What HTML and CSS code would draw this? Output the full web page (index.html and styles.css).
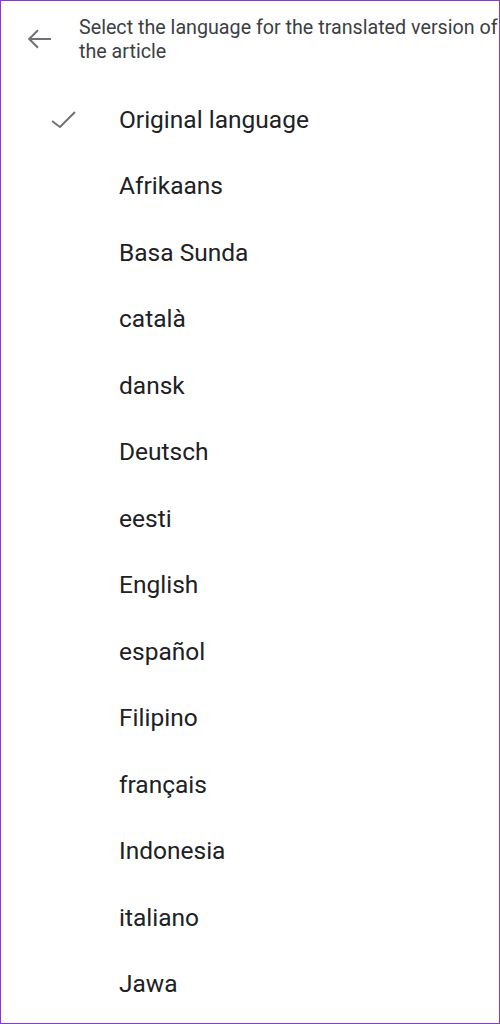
FILE: index.html
```html
<!DOCTYPE html>
<html>
<head>
<meta charset="utf-8">
<link rel="stylesheet" href="styles.css">
</head>
<body>
<div class="frame">
  <header class="header">
    <div class="back">
      <svg width="24" height="20" viewBox="0 0 24 20"><path d="M1.2 10H23M10 1.2L1.2 10L10 18.8" fill="none" stroke="#6f7175" stroke-width="2"/></svg>
    </div>
    <div class="title">Select the language for the translated version of the article</div>
  </header>
  <ul class="list">
    <li class="item"><span class="check"><svg width="26" height="18" viewBox="0 0 26 18"><path d="M2 10L10 16L25 1" fill="none" stroke="#6f7175" stroke-width="2"/></svg></span><span class="label">Original language</span></li>
    <li class="item"><span class="check"></span><span class="label">Afrikaans</span></li>
    <li class="item"><span class="check"></span><span class="label">Basa Sunda</span></li>
    <li class="item"><span class="check"></span><span class="label">català</span></li>
    <li class="item"><span class="check"></span><span class="label">dansk</span></li>
    <li class="item"><span class="check"></span><span class="label">Deutsch</span></li>
    <li class="item"><span class="check"></span><span class="label">eesti</span></li>
    <li class="item"><span class="check"></span><span class="label">English</span></li>
    <li class="item"><span class="check"></span><span class="label">español</span></li>
    <li class="item"><span class="check"></span><span class="label">Filipino</span></li>
    <li class="item"><span class="check"></span><span class="label">français</span></li>
    <li class="item"><span class="check"></span><span class="label">Indonesia</span></li>
    <li class="item"><span class="check"></span><span class="label">italiano</span></li>
    <li class="item"><span class="check"></span><span class="label">Jawa</span></li>
  </ul>
</div>
</body>
</html>
```

FILE: styles.css
```css
html, body {
  margin: 0;
  padding: 0;
  background: #ffffff;
}
.frame {
  width: 500px;
  height: 1024px;
  box-sizing: border-box;
  border: 1px solid #9430de;
  border-right-color: #8a3cc8;
  border-bottom-color: #8a3cc8;
  overflow: hidden;
  font-family: Roboto, "Noto Sans", sans-serif;
  background: #fff;
}
.header {
  display: flex;
  align-items: flex-start;
  height: 85px;
  box-sizing: border-box;
  padding-top: 15px;
}
.back {
  flex: none;
  width: 78px;
  box-sizing: border-box;
  padding-left: 27px;
  padding-top: 13px;
}
.back svg {
  display: block;
}
.title {
  flex: none;
  width: 436px;
  font-size: 19.7px;
  line-height: 24px;
  color: #3c4043;
}
.list {
  list-style: none;
  margin: 0;
  padding: 0;
}
.item {
  height: 66.5px;
  display: flex;
  align-items: center;
}
.check {
  flex: none;
  width: 118px;
  box-sizing: border-box;
  padding-left: 49px;
}
.check svg {
  display: block;
  margin-top: 1px;
}
.label {
  font-size: 24.5px;
  color: #202124;
}
```
